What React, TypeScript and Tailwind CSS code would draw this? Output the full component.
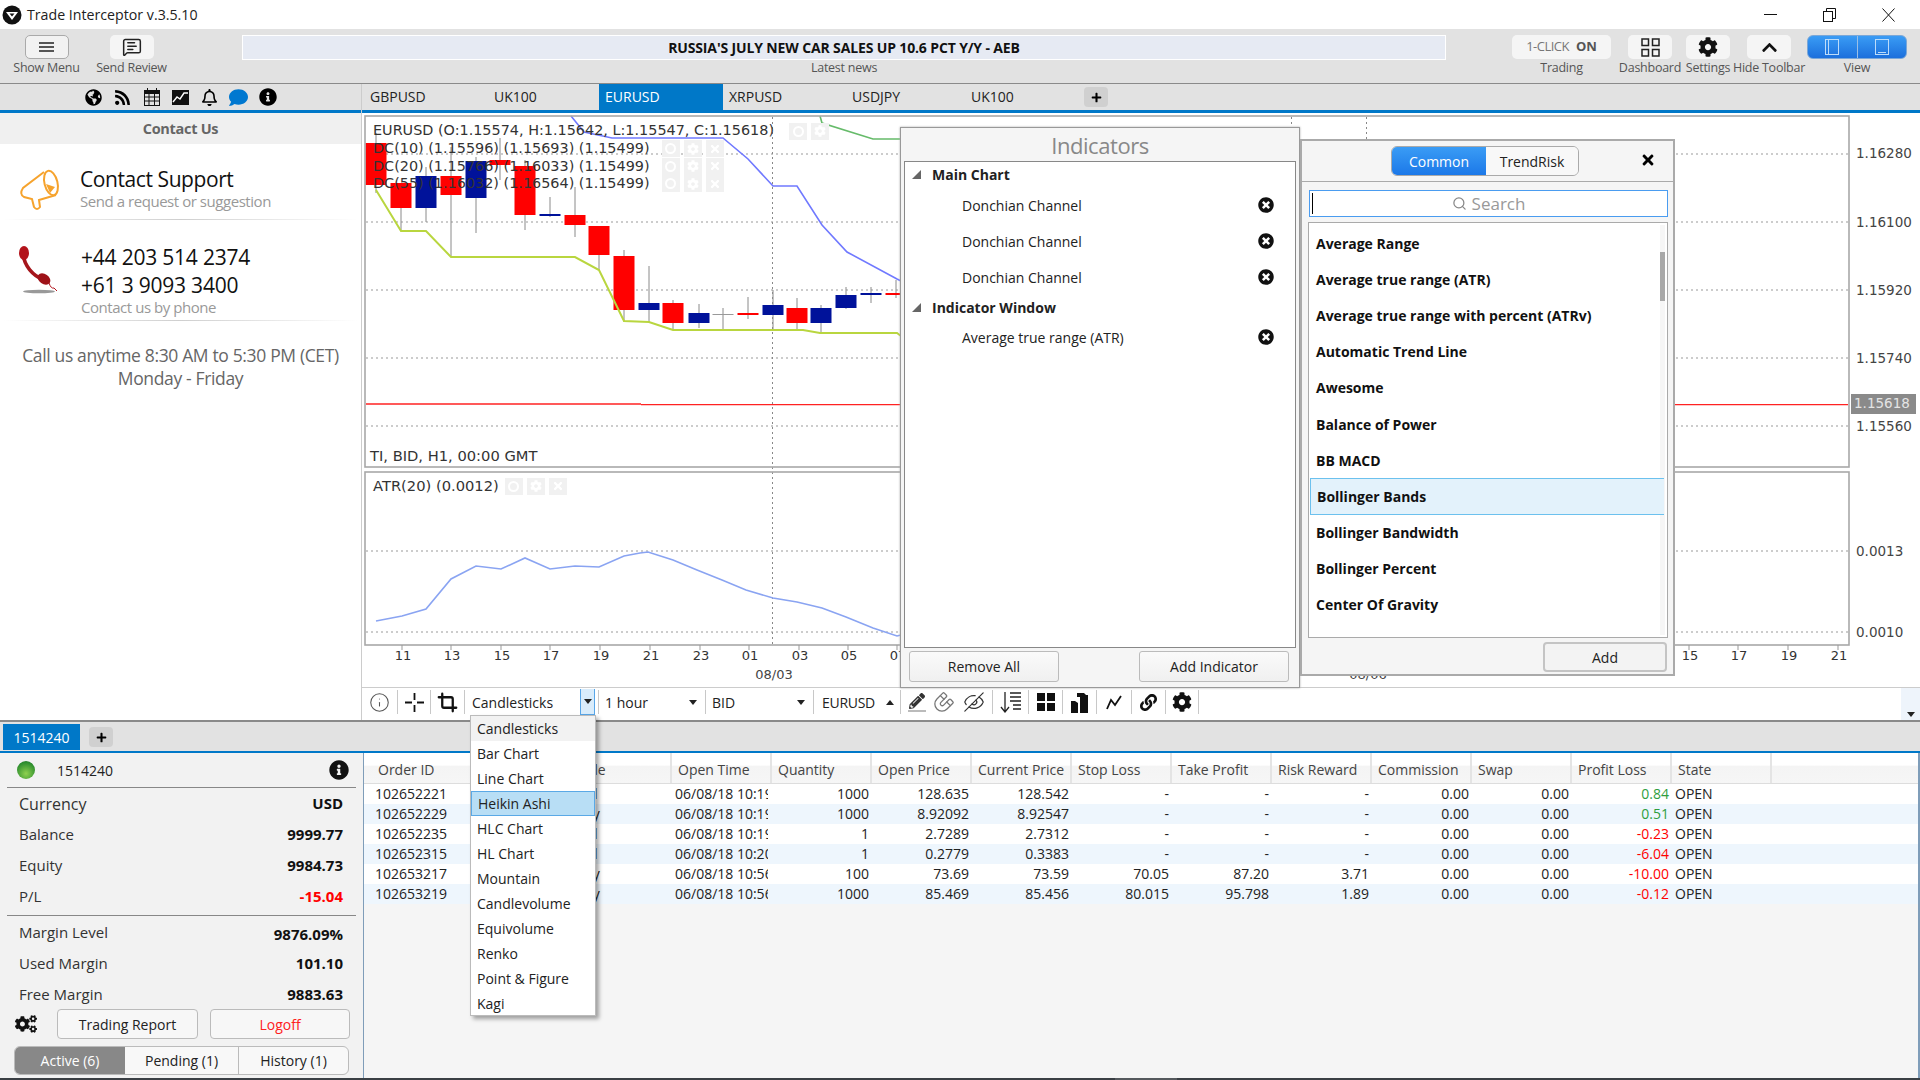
import React from "react";
import { FaGlobeAmericas, FaRss, FaRegBell, FaComment, FaInfoCircle, FaCog, FaCogs, FaTimes, FaTimesCircle, FaChevronUp, FaPlus, FaPencilAlt, FaLink } from "react-icons/fa";
import { Crop, Info, Magnet, EyeOff, MessageSquareText, Search } from "lucide-react";

const candles: [number, number, number, number, number, string][] = [
  [376, 143, 185, 133, 193, "r"], [401, 183, 208, 183, 230, "r"], [426, 176, 208, 167, 222, "b"],
  [451, 176, 195, 147, 257, "r"], [476, 161, 198, 157, 233, "b"], [500, 160, 165, 138, 180, "r"],
  [525, 166, 215, 160, 230, "r"], [550, 214, 216, 197, 217, "b"], [575, 215, 225, 187, 237, "r"],
  [599, 226, 255, 226, 270, "r"], [624, 256, 310, 250, 322, "r"], [649, 303, 310, 266, 322, "b"],
  [673, 303, 323, 300, 330, "r"], [699, 313, 323, 304, 328, "b"], [723, 314, 315, 308, 330, "g"],
  [748, 313, 315, 297, 319, "r"], [773, 305, 315, 290, 330, "b"], [797, 308, 323, 298, 330, "r"],
  [821, 308, 323, 305, 332, "b"], [846, 295, 308, 287, 309, "b"], [871, 293, 295, 287, 303, "b"],
  [896, 293, 295, 280, 298, "r"],
];
const fill: Record<string, string> = { r: "#ff0000", b: "#00129a", g: "#999999" };

function Chart() {
  const mono = "'DejaVu Sans', sans-serif";
  const grid = [154, 222, 290, 358, 426, 551, 632];
  const ticks: [number, string][] = [[402, "11"], [451, "13"], [501, "15"], [550, "17"], [600, "19"], [650, "21"], [700, "23"], [749, "01"], [799, "03"], [848, "05"], [897, "07"], [1304, "05"], [1689, "15"], [1738, "17"], [1788, "19"], [1838, "21"]];
  const prices: [number, string][] = [[153, "1.16280"], [222, "1.16100"], [290, "1.15920"], [358, "1.15740"], [426, "1.15560"], [551, "0.0013"], [632, "0.0010"]];
  return (
    <svg width={1558} height={574} viewBox="362 113 1558 574" className="block">
      <rect x="362" y="113" width="1558" height="574" fill="#fff" />
      {grid.map((y) => (
        <line key={y} x1="366" x2="1848" y1={y} y2={y} stroke="#999" strokeWidth="1" strokeDasharray="2 3" />
      ))}
      <line x1="772.5" x2="772.5" y1="117" y2="645" stroke="#888" strokeDasharray="2 3" />
      <line x1="1291.5" x2="1291.5" y1="117" y2="130" stroke="#888" strokeDasharray="2 3" />
      <line x1="1366.5" x2="1366.5" y1="117" y2="140" stroke="#888" strokeDasharray="2 3" />
      <line x1="366" x2="641" y1="404" y2="404" stroke="#f22" strokeWidth="1.4" />
      <line x1="641" x2="1848" y1="404.6" y2="404.6" stroke="#f22" strokeWidth="1.4" />
      {candles.map(([x, t, b, wt, wb, c]) => (
        <g key={x}>
          <line x1={x} x2={x} y1={wt} y2={wb} stroke="#8a8a8a" strokeWidth="1" />
          <rect x={x - 10.5} y={t} width="21" height={Math.max(b - t, 1)} fill={fill[c]} />
        </g>
      ))}
      <polyline fill="none" stroke="#b9d63f" strokeWidth="2" points="376,190 401,231 426,231 451,257 575,257 599,270 624,321 649,322 673,330 803,330 820,333 897,333 901,336" />
      <polyline fill="none" stroke="#7079ff" strokeWidth="1.6" points="571,116 584,132 612,138 723,138 748,159 773,186 797,186 822,225 847,252 897,279 901,281" />
      <polyline fill="none" stroke="#66bb6a" strokeWidth="1.6" points="820,116 822,123 873,139 901,139" />
      <polyline fill="none" stroke="#8aa4f2" strokeWidth="1.6" points="376,621 402,616 426,609 451,579 476,566 501,569 525,558 550,569 575,566 599,567 624,556 640,553 648,552 673,560 697,570 722,580 746,590 773,598 797,602 822,608 846,617 873,628 897,636 901,635" />
      <rect x="365" y="116" width="1484" height="351" fill="none" stroke="#a8a8a8" strokeWidth="1.6" />
      <rect x="365" y="472" width="1484" height="173" fill="none" stroke="#a8a8a8" strokeWidth="1.6" />
      {ticks.map(([x, t]) => (
        <g key={x}>
          <line x1={x} x2={x} y1="645" y2="650" stroke="#999" />
          <text x={x + 1} y="660" textAnchor="middle" fontFamily={mono} fontSize="13" fill="#333">{t}</text>
        </g>
      ))}
      <text x="774" y="679" textAnchor="middle" fontFamily={mono} fontSize="13" fill="#444">08/03</text>
      <text x="1368" y="679" textAnchor="middle" fontFamily={mono} fontSize="13" fill="#444">08/06</text>
      {prices.map(([y, t]) => (
        <text key={t} x="1856" y={y + 5} fontFamily={mono} fontSize="13.5" fill="#444">{t}</text>
      ))}
      <rect x="1851" y="394" width="65" height="20" fill="#8a8a8a" />
      <text x="1854" y="408" fontFamily={mono} fontSize="13.5" fill="#e4e4e4">1.15618</text>
    </svg>
  );
}

function Faint({ n }: { n: number }) {
  return (
    <div className="flex gap-[4px]">
      {[0, 1, 2].slice(0, n).map((i) => (
        <div key={i} className="w-[18px] h-[17px] bg-[#f1f1f1] flex items-center justify-center text-white">
          {i === 0 && <div className="w-[11px] h-[11px] rounded-full border-2 border-white" />}
          {i === 1 && <FaCog size={12} />}
          {i === 2 && <FaTimes size={12} />}
        </div>
      ))}
    </div>
  );
}

function Sep() {
  return <div className="w-px h-[24px] bg-[#c8c8c8] shrink-0" />;
}

function TopBtn({ label, w, children, className = "" }: { label: string; w: string; children: React.ReactNode; className?: string }) {
  return (
    <div className={`flex flex-col items-center shrink-0 ${w} ${className}`}>
      {children}
      <div className="mt-[1px] h-[16px] leading-[16px] text-[12.5px] text-[#555] whitespace-nowrap tracking-[-0.02em]">{label}</div>
    </div>
  );
}

function Arrow({ up = false }: { up?: boolean }) {
  return (
    <svg width="8" height="5" viewBox="0 0 8 5" className="shrink-0">
      <polygon points={up ? "0,5 8,5 4,0" : "0,0 8,0 4,5"} fill="#222" />
    </svg>
  );
}

function Tri() {
  return (
    <svg width="9" height="9" viewBox="0 0 9 9" className="shrink-0">
      <polygon points="9,0 9,9 0,9" fill="#666" />
    </svg>
  );
}

const indicators = ["Average Range", "Average true range (ATR)", "Average true range with percent (ATRv)", "Automatic Trend Line", "Awesome", "Balance of Power", "BB MACD", "Bollinger Bands", "Bollinger Bandwidth", "Bollinger Percent", "Center Of Gravity"];
const charts = ["Candlesticks", "Bar Chart", "Line Chart", "Heikin Ashi", "HLC Chart", "HL Chart", "Mountain", "Candlevolume", "Equivolume", "Renko", "Point & Figure", "Kagi"];
const cols = ["Order ID", "Symbol", "Side", "Open Time", "Quantity", "Open Price", "Current Price", "Stop Loss", "Take Profit", "Risk Reward", "Commission", "Swap", "Profit Loss", "State"];
const rows = [
  ["102652221", "AUDUSD", "Sell", "06/08/18 10:19:32", "1000", "128.635", "128.542", "-", "-", "-", "0.00", "0.00", "0.84", "OPEN"],
  ["102652229", "USDSEK", "Buy", "06/08/18 10:19:45", "1000", "8.92092", "8.92547", "-", "-", "-", "0.00", "0.00", "0.51", "OPEN"],
  ["102652235", "NGAS", "Sell", "06/08/18 10:19:51", "1", "2.7289", "2.7312", "-", "-", "-", "0.00", "0.00", "-0.23", "OPEN"],
  ["102652315", "XRPUSD", "Sell", "06/08/18 10:20:04", "1", "0.2779", "0.3383", "-", "-", "-", "0.00", "0.00", "-6.04", "OPEN"],
  ["102653217", "USOIL", "Buy", "06/08/18 10:56:10", "100", "73.69", "73.59", "70.05", "87.20", "3.71", "0.00", "0.00", "-10.00", "OPEN"],
  ["102653219", "AUDJPY", "Buy", "06/08/18 10:56:22", "1000", "85.469", "85.456", "80.015", "95.798", "1.89", "0.00", "0.00", "-0.12", "OPEN"],
];

function Stat({ label, value, cls = "", labelCls = "", h = "h-[31px]" }: { label: string; value: string; cls?: string; labelCls?: string; h?: string }) {
  return (
    <div className={`${h} flex items-center justify-between pl-[19px] pr-[20px] text-[15px] text-[#333]`}>
      <span className={labelCls}>{label}</span>
      <span className={`font-bold text-[#111] ${cls}`}>{value}</span>
    </div>
  );
}

export default function App() {
  return (
    <div className="relative w-[1920px] h-[1080px] overflow-hidden bg-white flex flex-col font-['Open_Sans',sans-serif] text-[14px] text-[#222]">
      {/* title bar */}
      <div className="h-[29px] flex items-center shrink-0 bg-white">
        <svg width="20" height="20" viewBox="0 0 20 20" className="ml-[2px]">
          <circle cx="10" cy="10" r="9.5" fill="#111" />
          <path d="M4 7 L16 7 L10 15 Z" fill="#fff" />
          <path d="M7.5 8.5 L12.5 8.5 L10 11.5 Z" fill="#111" />
        </svg>
        <span className="ml-[5px] text-[14.2px] text-[#222]">Trade Interceptor v.3.5.10</span>
        <div className="flex-1" />
        <svg width="13" height="2" className="mr-[46px]"><rect width="13" height="1" fill="#111" /></svg>
        <svg width="13" height="14" viewBox="0 0 13 14" fill="none" stroke="#111" className="mr-[46px]">
          <rect x="0.5" y="3.5" width="9" height="10" />
          <path d="M3.5 3 V0.5 H12.5 V10.5 H10" />
        </svg>
        <svg width="13" height="14" viewBox="0 0 13 14" stroke="#111" className="mr-[25px]">
          <path d="M0.5 0.5 L12.5 13.5 M12.5 0.5 L0.5 13.5" />
        </svg>
      </div>

      {/* toolbar */}
      <div className="h-[55px] shrink-0 bg-[#e2e2e2] border-b border-[#8a8a8a] flex pt-[6px]">
        <TopBtn label="Show Menu" w="w-[93px]">
          <div className="w-[44px] h-[24px] rounded-[5px] bg-[#f2f2f2] border border-[#aaa] flex flex-col items-center justify-center gap-[2px]">
            <div className="w-[15px] h-[2px] bg-[#555]" /><div className="w-[15px] h-[2px] bg-[#555]" /><div className="w-[15px] h-[2px] bg-[#555]" />
          </div>
        </TopBtn>
        <TopBtn label="Send Review" w="w-[77px]">
          <div className="w-[44px] h-[24px] rounded-[5px] bg-[#f5f5f5] flex items-center justify-center">
            <MessageSquareText size={20} strokeWidth={1.8} color="#222" />
          </div>
        </TopBtn>
        <div className="ml-[72px] w-[1204px] shrink-0 flex flex-col items-center">
          <div className="w-full h-[25px] bg-[#e6eaf3] border border-white flex items-center justify-center font-bold text-[14px] text-[#111] tracking-[-0.01em]">
            RUSSIA'S JULY NEW CAR SALES UP 10.6 PCT Y/Y - AEB
          </div>
          <div className="h-[16px] leading-[16px] text-[12.5px] text-[#555] tracking-[-0.02em]">Latest news</div>
        </div>
        <TopBtn label="Trading" w="w-[99px]" className="ml-[66px]">
          <div className="w-[99px] h-[24px] rounded-[5px] bg-[#f5f5f5] flex items-center justify-center gap-[7px] text-[13px]">
            <span className="text-[#777] tracking-[-0.04em]">1-CLICK</span><b className="text-[#555]">ON</b>
          </div>
        </TopBtn>
        <TopBtn label="Dashboard" w="w-[76px]" className="ml-[1px]">
          <div className="w-[44px] h-[24px] rounded-[5px] bg-[#f5f5f5] flex items-center justify-center">
            <svg width="19" height="19" viewBox="0 0 19 19" fill="none" stroke="#222" strokeWidth="1.5">
              <rect x="1" y="1" width="6.5" height="6.5" /><rect x="11.5" y="1" width="6.5" height="6.5" /><rect x="1" y="11.5" width="6.5" height="6.5" /><rect x="11.5" y="11.5" width="6.5" height="6.5" />
            </svg>
          </div>
        </TopBtn>
        <TopBtn label="Settings" w="w-[40px]">
          <div className="w-[44px] h-[24px] shrink-0 rounded-[5px] bg-[#f5f5f5] flex items-center justify-center text-[#111]"><FaCog size={20} /></div>
        </TopBtn>
        <TopBtn label="Hide Toolbar" w="w-[82px]">
          <div className="w-[44px] h-[24px] rounded-[5px] bg-[#f5f5f5] flex items-center justify-center text-[#111]"><FaChevronUp size={17} /></div>
        </TopBtn>
        <TopBtn label="View" w="w-[100px]" className="-ml-[3px]">
          <div className="w-[100px] h-[24px] rounded-[6px] bg-linear-to-b from-[#3a9cf5] to-[#1c6fdc] border border-[#7aa7d8] flex">
            <div className="flex-1 flex items-center justify-center border-r border-[#9bbfe6]">
              <div className="w-[14px] h-[16px] border border-[#bcdcfa] pl-[2px]"><div className="w-px h-full bg-[#bcdcfa]" /></div>
            </div>
            <div className="flex-1 flex items-center justify-center">
              <div className="w-[14px] h-[16px] border border-[#bcdcfa] flex items-end justify-center pb-[1px]"><div className="w-[8px] h-px bg-[#bcdcfa]" /></div>
            </div>
          </div>
        </TopBtn>
      </div>

      {/* main */}
      <div className="h-[636px] shrink-0 flex">
        <aside className="w-[362px] shrink-0 border-r border-[#ccc] flex flex-col bg-white">
          <div className="h-[29px] bg-[#e2e2e2] border-b-[3px] border-[#0078c8] pl-[79px] flex items-center text-black">
            <div className="w-[29px] flex justify-center"><FaGlobeAmericas size={17} /></div>
            <div className="w-[29px] flex justify-center"><FaRss size={17} /></div>
            <div className="w-[29px] flex justify-center">
              <svg width="16" height="18" viewBox="0 0 16 18" fill="none" stroke="#111">
                <rect x="0.5" y="2.5" width="15" height="15" /><rect x="0.5" y="2.5" width="15" height="3" fill="#111" />
                <path d="M3.5 0 V4 M12.5 0 V4 M0 9 H16 M0 13 H16 M5 6 V18 M10.5 6 V18" />
              </svg>
            </div>
            <div className="w-[29px] flex justify-center">
              <svg width="17" height="15" viewBox="0 0 17 15"><rect width="17" height="15" fill="#111" /><polyline points="1,12 5,7 8,9 12,3 16,3" fill="none" stroke="#fff" strokeWidth="1.4" /></svg>
            </div>
            <div className="w-[29px] flex justify-center"><FaRegBell size={17} /></div>
            <div className="w-[29px] flex justify-center text-[#0078d0]"><FaComment size={19} /></div>
            <div className="w-[29px] flex justify-center"><FaInfoCircle size={18} /></div>
          </div>
          <div className="h-[31px] bg-[#f0f0f0] flex items-center justify-center font-bold text-[14.5px] text-[#666] tracking-[-0.02em]">Contact Us</div>
          <div className="h-[75px] flex items-center pl-[18px] pt-[12px]">
            <svg width="44" height="48" viewBox="8 2 44 48" fill="none" stroke="#f6a32d" strokeWidth="2">
              <ellipse cx="41" cy="21" rx="6.5" ry="12.5" transform="rotate(-14 41 21)" />
              <path d="M34 10 L13 26 Q9 32 14 35 L22 37 L24 45 Q27 49 30 45 L29 38 L46 33" />
              <polygon points="36,22 45,25 40,31" fill="#f6a32d" stroke="none" />
            </svg>
            <div className="ml-[18px] flex flex-col">
              <span className="text-[21px] leading-[28px] text-[#111] tracking-[-0.02em]">Contact Support</span>
              <span className="text-[15px] leading-[17px] text-[#999] tracking-[-0.03em]">Send a request or suggestion</span>
            </div>
          </div>
          <div className="h-px mx-[3px] bg-linear-to-r from-transparent via-[#cfcfcf] to-transparent" />
          <div className="h-[100px] flex items-center pl-[11px]">
            <svg width="47" height="62" viewBox="0 78 47 62" fill="none">
              <path d="M12 92 C13 105 22 115 33 119" stroke="#a5161c" strokeWidth="3.6" />
              <ellipse cx="13" cy="92" rx="5" ry="7" fill="#b3131b" />
              <ellipse cx="33" cy="118" rx="7" ry="5" transform="rotate(35 33 118)" fill="#9e1218" />
              <path d="M38 122 Q40 128 43 127 L46 130" stroke="#b3131b" strokeWidth="1" />
              <ellipse cx="28" cy="130.5" rx="16" ry="1.8" fill="#999" />
            </svg>
            <div className="ml-[23px] pt-[18px] flex flex-col text-[21px] text-[#111] tracking-[-0.01em]">
              <span className="leading-[28px]">+44 203 514 2374</span>
              <span className="leading-[28px]">+61 3 9093 3400</span>
              <span className="text-[15px] leading-[17px] text-[#999] tracking-[-0.03em]">Contact us by phone</span>
            </div>
          </div>
          <div className="h-px mx-[3px] bg-linear-to-r from-transparent via-[#cfcfcf] to-transparent" />
          <div className="pt-[23px] text-center text-[17.5px] leading-[23px] text-[#666] tracking-[-0.02em]">
            <div>Call us anytime 8:30 AM to 5:30 PM (CET)</div>
            <div>Monday - Friday</div>
          </div>
        </aside>
        <div className="flex-1 flex flex-col min-w-0">
          <div className="h-[29px] bg-[#e2e2e2] border-b-[3px] border-[#0078c8] flex shrink-0 pl-[2px] text-[14px] text-[#222]">
            {[["GBPUSD", "w-[124px]"], ["UK100", "w-[111px]"], ["EURUSD", "w-[124px] bg-[#0078c8] text-white"], ["XRPUSD", "w-[123px]"], ["USDJPY", "w-[119px]"], ["UK100", "w-[119px]"]].map(([t, c], i) => (
              <div key={i} className={`h-full flex items-center pl-[6px] pb-[2px] ${c}`}>{t}</div>
            ))}
            <div className="w-[24px] h-[20px] mt-[3px] rounded-[4px] bg-[#d0d0d0] flex items-center justify-center text-black"><FaPlus size={11} /></div>
          </div>
          <div className="h-[574px] shrink-0"><Chart /></div>
          <div className="h-[33px] shrink-0 border-t border-[#ccc] flex items-center bg-white pb-[4px]">
            <div className="w-[35px] flex justify-center"><Info size={21} strokeWidth={1.2} color="#555" /></div><Sep />
            <div className="w-[32px] flex justify-center">
              <svg width="19" height="19" viewBox="0 0 19 19" stroke="#111" strokeWidth="1.8"><path d="M9.5 0 V7 M9.5 12 V19 M0 9.5 H7 M12 9.5 H19" /></svg>
            </div><Sep />
            <div className="w-[33px] flex justify-center"><Crop size={21} strokeWidth={2.6} color="#111" /></div><Sep />
            <div className="ml-[5px] w-[125px] h-[26px] bg-white flex items-center relative">
              <span className="pl-[2px] text-[14px]">Candlesticks</span>
              <div className="absolute right-0 top-0 w-[15px] h-[26px] bg-[#d9ecfb] border-x border-b border-[#58a6e8] flex items-center justify-center"><Arrow /></div>
            </div>
            <div className="w-[3px]" /><Sep />
            <div className="w-[106px] pl-[6px] pr-[8px] flex items-center justify-between"><span>1 hour</span><Arrow /></div><Sep />
            <div className="w-[107px] pl-[6px] pr-[8px] flex items-center justify-between"><span>BID</span><Arrow /></div><Sep />
            <div className="w-[86px] pl-[8px] pr-[6px] flex items-center justify-between tracking-[-0.02em]"><span>EURUSD</span><Arrow up /></div><Sep />
            <div className="w-[91px] flex items-center justify-around px-[3px]">
              <div className="flex flex-col items-center text-[#333]"><FaPencilAlt size={16} /><div className="w-[18px] h-[2px] mt-[1px] bg-[#bbb]" /></div>
              <div className="rotate-180"><Magnet size={22} strokeWidth={1.4} color="#777" /></div>
              <div className="-scale-x-100"><EyeOff size={22} strokeWidth={1.3} color="#333" /></div>
            </div><Sep />
            <div className="w-[35px] flex justify-center">
              <svg width="22" height="22" viewBox="0 0 22 22" stroke="#222" strokeWidth="1.3" fill="none">
                <path d="M5 1 V21 M1 16 L5 21 L9 16 M10 2 H21 M10 6 H21 M10 10 H21 M13 14 H21 M13 18 H21" />
              </svg>
            </div><Sep />
            <div className="w-[33px] flex justify-center">
              <svg width="18" height="18" viewBox="0 0 18 18" fill="#111"><rect width="8" height="8" /><rect x="10" width="8" height="8" /><rect y="10" width="8" height="8" /><rect x="10" y="10" width="8" height="8" /></svg>
            </div><Sep />
            <div className="w-[33px] flex justify-center">
              <svg width="17" height="21" viewBox="0 0 17 21" fill="#111"><path d="M6 1 H13 L15 3 H17 V21 H9 V5 H6 Z" /><path d="M0 9 H4 L7 11 V21 H0 Z" /></svg>
            </div><Sep />
            <div className="w-[34px] flex justify-center">
              <svg width="16" height="16" viewBox="0 0 16 16" fill="none" stroke="#111" strokeWidth="1.8"><polyline points="1,15 5,6 9,11 15,2" /></svg>
            </div><Sep />
            <div className="w-[33px] flex justify-center text-[#111]"><FaLink size={17} /></div><Sep />
            <div className="w-[32px] flex justify-center text-[#111]"><FaCog size={20} /></div><Sep />
            <div className="flex-1" />
            <div className="w-[19px] self-stretch -mb-[4px] bg-[#eef4fb] flex flex-col justify-end items-center pb-[3px]"><Arrow /></div>
          </div>
        </div>
      </div>
      <div className="h-[2px] shrink-0 bg-[#8a8a8a]" />

      {/* bottom */}
      <div className="h-[31px] shrink-0 bg-[#e2e2e2] border-b-[2px] border-[#0078c8] flex pl-[3px]">
        <div className="w-[77px] h-[26px] mt-[2px] bg-[#0078c8] text-white flex items-center justify-center text-[14px]">1514240</div>
        <div className="w-[24px] h-[20px] mt-[5px] ml-[9px] rounded-[4px] bg-[#d0d0d0] flex items-center justify-center text-black"><FaPlus size={11} /></div>
      </div>
      <div className="h-[325px] shrink-0 flex">
        <div className="w-[363px] shrink-0 bg-[#f2f2f2] flex flex-col">
          <div className="h-[34px] flex items-center pl-[17px] pr-[14px]">
            <div className="w-[18px] h-[18px] rounded-full bg-[radial-gradient(circle_at_50%_70%,#8fd14f,#2f8f2f_70%,#1b6b2b)]" />
            <span className="ml-[22px] text-[14px]">1514240</span>
            <div className="flex-1" />
            <FaInfoCircle size={20} color="#111" />
          </div>
          <div className="h-px mx-[7px] bg-[#888] shrink-0" />
          <Stat label="Currency" value="USD" labelCls="text-[16px]" />
          <Stat label="Balance" value="9999.77" />
          <Stat label="Equity" value="9984.73" />
          <Stat label="P/L" value="-15.04" cls="!text-[#ff0000]" />
          <div className="h-px mx-[7px] mt-[3px] bg-[#888] shrink-0" />
          <Stat label="Margin Level" value="9876.09%" cls="mt-[4px]" h="h-[32px]" />
          <Stat label="Used Margin" value="101.10" />
          <Stat label="Free Margin" value="9883.63" h="h-[30px]" />
          <div className="flex items-center h-[30px] pl-[15px]">
            <FaCogs size={22} color="#111" />
            <div className="ml-[20px] w-[141px] h-[30px] rounded-[4px] border border-[#bbb] bg-[#f7f7f7] flex items-center justify-center">Trading Report</div>
            <div className="ml-[12px] w-[140px] h-[30px] rounded-[4px] border border-[#bbb] bg-[#f7f7f7] flex items-center justify-center text-[#ff2020]">Logoff</div>
          </div>
          <div className="ml-[14px] mt-[7px] w-[335px] h-[29px] rounded-[6px] border border-[#bbb] flex overflow-hidden text-[14px] bg-[#f8f8f8]">
            <div className="w-[110px] bg-[#888] text-white flex items-center justify-center">Active (6)</div>
            <div className="w-[114px] border-r border-[#bbb] flex items-center justify-center">Pending (1)</div>
            <div className="flex-1 flex items-center justify-center">History (1)</div>
          </div>
        </div>
        <div className="flex-1 min-w-0 bg-[#f5f5f5] border-l border-[#7f9db9] border-r-2 flex flex-col text-[14px]">
          <div className="h-[31px] bg-[linear-gradient(#fff_0,#fff_40%,#f4f4f4_45%,#f6f6f6_100%)] border-b border-[#ddd] flex pl-[8px] shrink-0">
            {cols.map((c) => (
              <div key={c} className="w-[100px] shrink-0 pl-[6px] pt-[2px] flex items-center border-r-2 border-[#e4e4e4] text-[#444] whitespace-nowrap overflow-hidden">{c}</div>
            ))}
          </div>
          {rows.map((r, i) => (
            <div key={r[0]} className={`h-[20px] flex pl-[8px] leading-[20px] ${i % 2 ? "bg-[#eef6fd]" : "bg-white"}`}>
              {r.map((v, j) => {
                const left = j < 4 || j === 13;
                const color = j === 12 ? (v.startsWith("-") ? "text-[#ff0000]" : "text-[#2e9e3e]") : "text-[#222]";
                const box = j === 3 ? "w-[96px] mr-[4px]" : "w-[100px]";
                return (
                  <div key={j} className={`${box} shrink-0 overflow-hidden whitespace-nowrap ${color} ${left ? "pl-[3px] text-left" : "pr-[3px] text-right"}`}>{v}</div>
                );
              })}
            </div>
          ))}
        </div>
      </div>
      <div className="flex-1 bg-[#3a3f44] flex">
        <div className="ml-[1115px] w-[62px] bg-[#55595d]" />
      </div>

      {/* legend */}
      <div className="absolute left-[373px] top-[122px] font-['DejaVu_Sans',sans-serif] text-[14.4px] text-[#333] flex flex-col">
        <div className="h-[18px] flex items-center whitespace-nowrap">EURUSD (O:1.15574, H:1.15642, L:1.15547, C:1.15618)<div className="ml-[15px]"><Faint n={2} /></div></div>
        {["DC(10) (1.15596) (1.15693) (1.15499)", "DC(20) (1.15766) (1.16033) (1.15499)", "DC(55) (1.16032) (1.16564) (1.15499)"].map((t) => (
          <div key={t} className="h-[17.6px] flex items-center whitespace-nowrap">{t}<div className="ml-[12px]"><Faint n={3} /></div></div>
        ))}
      </div>
      <div className="absolute left-[370px] top-[447px] font-['DejaVu_Sans',sans-serif] text-[14.7px] leading-[18px] text-[#333]">TI, BID, H1, 00:00 GMT</div>
      <div className="absolute left-[373px] top-[477px] font-['DejaVu_Sans',sans-serif] text-[14.7px] leading-[18px] text-[#333] flex items-center">ATR(20) (0.0012)<div className="ml-[6px]"><Faint n={3} /></div></div>

      {/* tag dialog */}
      <div className="absolute left-[1300px] top-[139px] w-[375px] h-[537px] bg-[#f5f5f5] border-2 border-[#aaa] flex flex-col">
        <div className="h-[41px] shrink-0 border-b border-[#aaa] relative flex items-center justify-center">
          <div className="ml-[-5px] w-[188px] h-[30px] rounded-[6px] border border-[#aaa] flex overflow-hidden">
            <div className="w-[94px] bg-linear-to-b from-[#3a9cf5] to-[#1c78e8] text-white flex items-center justify-center">Common</div>
            <div className="flex-1 bg-[#f8f8f8] flex items-center justify-center">TrendRisk</div>
          </div>
          <div className="absolute right-[17px] top-[11px] text-black"><FaTimes size={16} /></div>
        </div>
        <div className="ml-[7px] mr-[5px] mt-[8px] h-[27px] shrink-0 bg-white border border-[#4a9cf0] flex items-center justify-center relative text-[#999] text-[17px]">
          <div className="absolute left-[2px] top-[2px] w-px h-[21px] bg-black" />
          <Search size={15} color="#888" className="mr-[5px]" />Search
        </div>
        <div className="relative ml-[6px] mr-[5px] mt-[5px] h-[416px] shrink-0 bg-white border border-[#aaa] pt-[2px] pr-[3px] pl-[1px]">
          {indicators.map((t) => (
            <div key={t} className={`h-[36.2px] pl-[6px] flex items-center font-bold text-[14px] text-[#111] ${t === "Bollinger Bands" ? "relative z-10 bg-[#e3f2fb] border-y border-l border-[#6cc1ee]" : ""}`}>{t}</div>
          ))}
          <div className="absolute right-[2px] top-[2px] bottom-[2px] w-[5px] bg-[#f6f6f6]">
            <div className="mt-[27px] h-[49px] bg-[#a8a8a8]" />
          </div>
        </div>
        <div className="flex justify-end pr-[6px] pt-[4px]">
          <div className="w-[124px] h-[30px] rounded-[4px] border-2 border-[#c4c4c4] bg-[#f3f3f3] flex items-center justify-center">Add</div>
        </div>
      </div>

      {/* indicators dialog */}
      <div className="absolute left-[900px] top-[127px] w-[400px] h-[561px] bg-[#f5f5f5] border border-[#999] flex flex-col shadow-[0_0_2px_#aaa]">
        <div className="h-[33px] pt-[2px] shrink-0 flex items-center justify-center text-[22px] text-[#888] tracking-[-0.02em]">Indicators</div>
        <div className="mx-[3px] h-[487px] shrink-0 bg-white border border-[#888] pr-[21px]">
          <div className="h-[25px] flex items-center pl-[7px] gap-[11px] font-bold text-[14px]"><Tri />Main Chart</div>
          {[0, 1, 2].map((i) => (
            <div key={i} className="h-[36px] flex items-center justify-between pl-[57px]">
              <span>Donchian Channel</span><FaTimesCircle size={16} color="#111" />
            </div>
          ))}
          <div className="h-[24px] flex items-center pl-[7px] gap-[11px] font-bold text-[14px]"><Tri />Indicator Window</div>
          <div className="h-[36px] flex items-center justify-between pl-[57px]">
            <span>Average true range (ATR)</span><FaTimesCircle size={16} color="#111" />
          </div>
        </div>
        <div className="flex justify-between pl-[8px] pr-[10px] mt-[3px]">
          <div className="w-[150px] h-[31px] rounded-[3px] border border-[#bbb] bg-linear-to-b from-[#fafafa] to-[#f0f0f0] flex items-center justify-center">Remove All</div>
          <div className="w-[150px] h-[31px] rounded-[3px] border border-[#bbb] bg-linear-to-b from-[#fafafa] to-[#f0f0f0] flex items-center justify-center">Add Indicator</div>
        </div>
      </div>

      {/* chart type menu */}
      <div className="absolute left-[470px] top-[715px] w-[126px] h-[301px] bg-white border border-[#bbb] shadow-[3px_3px_4px_rgba(0,0,0,0.35)] flex flex-col">
        {charts.map((c, i) => (
          <div key={c} className={`h-[25px] shrink-0 pl-[6px] flex items-center text-[14px] text-[#222] ${i === 0 ? "bg-[#f2f2f2]" : ""} ${i === 3 ? "bg-[#b8def5] border border-[#5aa9e6] pl-[5px]" : ""}`}>{c}</div>
        ))}
      </div>
    </div>
  );
}
